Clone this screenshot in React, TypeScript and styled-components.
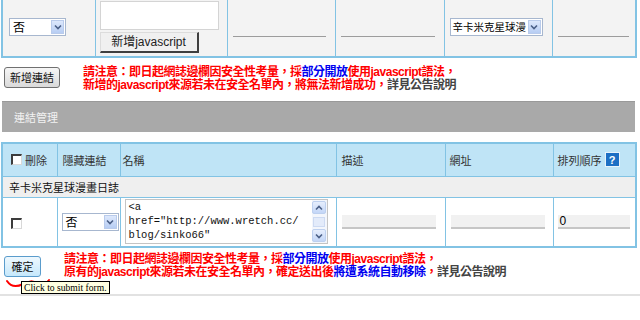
import React from 'react';
import styled, { createGlobalStyle } from 'styled-components';

const GlobalStyle = createGlobalStyle`
  html, body {
    margin: 0;
    padding: 0;
    background: #fff;
  }
  body {
    font-family: "Noto Sans CJK TC", "Noto Sans", sans-serif;
    font-size: 11px;
    color: #333;
  }
`;

const Page = styled.div`
  position: relative;
  width: 640px;
  height: 320px;
  overflow: hidden;
  background: #fff;
`;

const Grid = styled.table<{ $open?: boolean }>`
  margin-left: 1px;
  width: 634px;
  table-layout: fixed;
  border-collapse: collapse;
  border: 2px solid #82c3e4;
  ${(p) => (p.$open ? 'border-top: none;' : '')}

  td {
    border: 1px solid #82c3e4;
    ${(p) => (p.$open ? 'border-top: none;' : '')}
  }
`;

const Row = styled.tr<{ $h: number; $bg: string }>`
  height: ${(p) => p.$h}px;
  background: ${(p) => p.$bg};
`;

const Cell = styled.td<{ $pad?: string; $top?: boolean }>`
  padding: ${(p) => p.$pad || '0 5px'};
  vertical-align: ${(p) => (p.$top ? 'top' : 'middle')};
  font-size: 11px;
  line-height: 14px;
  color: #333;
  white-space: nowrap;
  overflow: hidden;
`;

const GroupCell = styled(Cell)`
  color: #111;
  padding-left: 6px;
`;

const SelectBox = styled.div<{ $w: number }>`
  display: flex;
  width: ${(p) => p.$w}px;
  height: 18px;
  box-sizing: border-box;
  border: 1px solid #a7b7cf;
  background: #fff;
`;

const SelectText = styled.span<{ $size?: number }>`
  flex: 1;
  min-width: 0;
  padding-left: ${(p) => (p.$size ? 2 : 3)}px;
  font-size: ${(p) => p.$size || 12}px;
  line-height: 16px;
  color: #000;
  white-space: nowrap;
`;

const SelectArrow = styled.span`
  flex: none;
  width: 13px;
  margin: 1px;
  box-sizing: border-box;
  border: 1px solid #b9cbeb;
  background: linear-gradient(#dde8fc, #b7cdf3);
  display: flex;
  align-items: center;
  justify-content: center;
`;

const Chevron = () => (
  <svg width="8" height="6" viewBox="0 0 8 6">
    <polyline points="1,1.5 4,4.5 7,1.5" fill="none" stroke="#4a5f86" strokeWidth="1.6" />
  </svg>
);

const Select = ({ w, value, size }: { w: number; value: string; size?: number }) => (
  <SelectBox $w={w}>
    <SelectText $size={size}>{value}</SelectText>
    <SelectArrow>
      <Chevron />
    </SelectArrow>
  </SelectBox>
);

const LineInput = styled.div<{ $w: number; $fill?: boolean }>`
  width: ${(p) => p.$w}px;
  height: 14px;
  box-sizing: border-box;
  background: ${(p) => (p.$fill ? '#f1f1f1' : 'transparent')};
  border-bottom: ${(p) => (p.$fill ? '2px solid #c6c6c6' : '1px solid #9c9c9c')};
  padding-left: 2px;
  font-family: "Liberation Sans", Arial, sans-serif;
  font-size: 12px;
  line-height: 13px;
  color: #000;
`;

const Stack = styled.div`
  display: flex;
  flex-direction: column;
  gap: 2px;
`;

const SmallArea = styled.div`
  width: 119px;
  height: 29px;
  box-sizing: border-box;
  border: 1px solid #d4d4d4;
  background: #fff;
`;

const FlatButton = styled.div`
  width: 99px;
  height: 21px;
  box-sizing: border-box;
  background: #f0f0f0;
  border: 1px solid #dcdcdc;
  border-right: 2px solid #3f3f3f;
  border-bottom: 2px solid #3f3f3f;
  font-family: "Liberation Sans", "Noto Sans CJK TC", sans-serif;
  font-size: 12px;
  line-height: 18px;
  text-align: center;
  color: #222;
`;

const ActionRow = styled.div<{ $mt: number; $center?: boolean }>`
  display: flex;
  align-items: ${(p) => (p.$center ? 'center' : 'flex-start')};
  gap: 23px;
  margin-top: ${(p) => p.$mt}px;
  padding-left: 4px;
`;

const GrayButton = styled.div`
  width: 56px;
  height: 21px;
  margin-top: 1px;
  box-sizing: border-box;
  border: 1px solid #707070;
  border-radius: 3px;
  background: linear-gradient(#f6f6f6, #dadada);
  font-size: 11px;
  line-height: 19px;
  text-align: center;
  color: #111;
`;

const ButtonWrap = styled.div`
  position: relative;
  flex: none;
`;

const BlueButton = styled.div`
  width: 37px;
  height: 21px;
  box-sizing: border-box;
  border: 1px solid #5a9ccc;
  border-radius: 3px;
  background: linear-gradient(#eef8fe, #c6e8fb);
  font-size: 11px;
  line-height: 19px;
  text-align: center;
  color: #111;
`;

const Tooltip = styled.div`
  position: absolute;
  left: 17px;
  top: 25px;
  padding: 0 2px;
  border: 1px solid #000;
  background: #ffffe1;
  font-family: "Liberation Serif", "Times New Roman", serif;
  font-size: 9.6px;
  line-height: 11px;
  color: #000;
  white-space: nowrap;
  z-index: 2;
`;

const Scribble = styled.svg`
  position: absolute;
  left: 0;
  top: 22px;
  z-index: 1;
`;

const Notice = styled.div`
  font-family: "Liberation Sans", "Noto Sans CJK TC", sans-serif;
  font-size: 12px;
  font-weight: 700;
  letter-spacing: -0.5px;
  line-height: 13px;
  color: #ff0000;
  white-space: nowrap;
`;

const Blue = styled.span`
  color: #0000f0;
`;

const Gray = styled.span`
  color: #444;
`;

const SectionBar = styled.div`
  margin: 9px 0 0 2px;
  width: 633px;
  height: 31px;
  box-sizing: border-box;
  border-top: 1px solid #999;
  background: #a9a9a9;
  padding-left: 12px;
  display: flex;
  align-items: center;
  font-size: 11px;
  color: #f2f2f2;
`;

const Check = styled.span`
  display: inline-block;
  width: 11px;
  height: 11px;
  box-sizing: border-box;
  background: #fff;
  border-top: 2px solid #3c3c3c;
  border-left: 2px solid #3c3c3c;
  border-right: 1px solid #d8d8d8;
  border-bottom: 1px solid #d8d8d8;
  vertical-align: middle;
`;

const HeadLabel = styled.span`
  display: inline-flex;
  align-items: center;
  gap: 3px;
`;

const HelpIcon = styled.span`
  display: inline-flex;
  align-items: center;
  justify-content: center;
  width: 15px;
  height: 15px;
  box-sizing: border-box;
  border: 1px solid #e8f3fb;
  background: #1d6fc4;
  color: #fff;
  font-family: "Liberation Sans", Arial, sans-serif;
  font-weight: 700;
  font-size: 11px;
`;

const CodeBox = styled.div`
  display: flex;
  width: 203px;
  height: 45px;
  box-sizing: border-box;
  border: 1px solid #c4c4c4;
  background: #fff;
`;

const CodeText = styled.pre`
  margin: 0;
  flex: 1;
  padding: 0 3px;
  font-family: "Liberation Mono", "Courier New", monospace;
  font-size: 10.5px;
  line-height: 14px;
  color: #111;
  overflow: hidden;
`;

const ScrollTrack = styled.div`
  width: 15px;
  display: flex;
  flex-direction: column;
  justify-content: space-between;
  align-items: center;
  background: #f3f6fc;
  padding: 1px 0;
`;

const ScrollBtn = styled.span`
  width: 14px;
  height: 13px;
  box-sizing: border-box;
  border: 1px solid #bdd0ef;
  border-radius: 2px;
  background: linear-gradient(#e6eefd, #c3d6f7);
  display: flex;
  align-items: center;
  justify-content: center;
`;

const ScrollThumb = styled.span`
  width: 10px;
  height: 8px;
  border: 1px solid #cddaf2;
  background: #e3ebfa;
`;

const Divider = styled.div`
  margin-top: 15px;
  width: 640px;
  height: 2px;
  background: #e2e2e2;
`;

const topCols = [93, 132, 108, 109, 108, 84];
const linkCols = [55, 63, 216, 109, 108, 83];

export default function App() {
  return (
    <Page>
      <GlobalStyle />
      <Grid $open>
        <colgroup>
          {topCols.map((w, i) => (
            <col key={i} style={{ width: w }} />
          ))}
        </colgroup>
        <tbody>
          <Row $h={57} $bg="#f3f3f3">
            <Cell $pad="0 6px 2px">
              <Select w={57} value="否" />
            </Cell>
            <Cell $top $pad="1px 4px 0">
              <Stack>
                <SmallArea />
                <FlatButton>新增javascript</FlatButton>
              </Stack>
            </Cell>
            <Cell $pad="3px 5px 0">
              <LineInput $w={93} />
            </Cell>
            <Cell $pad="3px 5px 0">
              <LineInput $w={94} />
            </Cell>
            <Cell $pad="0 5px 2px">
              <Select w={93} value="辛卡米克星球漫" size={10.5} />
            </Cell>
            <Cell $pad="3px 5px 0">
              <LineInput $w={71} />
            </Cell>
          </Row>
        </tbody>
      </Grid>

      <ActionRow $mt={8}>
        <GrayButton>新增連結</GrayButton>
        <Notice>
          請注意：即日起網誌邊欄因安全性考量，採<Blue>部分開放</Blue>使用javascript語法，
          <br />
          新增的javascript來源若未在安全名單內，將無法新增成功，<Gray>詳見公告說明</Gray>
        </Notice>
      </ActionRow>

      <SectionBar>連結管理</SectionBar>

      <Grid style={{ marginTop: 10 }}>
        <colgroup>
          {linkCols.map((w, i) => (
            <col key={i} style={{ width: w }} />
          ))}
        </colgroup>
        <tbody>
          <Row $h={33} $bg="#bfe4f6">
            <Cell $pad="0 3px 0 8px">
              <HeadLabel>
                <Check />
                刪除
              </HeadLabel>
            </Cell>
            <Cell>隱藏連結</Cell>
            <Cell $pad="0 2px">名稱</Cell>
            <Cell>描述</Cell>
            <Cell $pad="0 4px">網址</Cell>
            <Cell $pad="0 4px">
              <HeadLabel>
                排列順序
                <HelpIcon>?</HelpIcon>
              </HeadLabel>
            </Cell>
          </Row>
          <Row $h={21} $bg="#efefef">
            <GroupCell colSpan={6}>辛卡米克星球漫畫日誌</GroupCell>
          </Row>
          <Row $h={50} $bg="#fff">
            <Cell $pad="0 8px">
              <Check />
            </Cell>
            <Cell $pad="0 4px">
              <Select w={57} value="否" />
            </Cell>
            <Cell $pad="0 4px">
              <CodeBox>
                <CodeText>
                  {'<a\nhref="http://www.wretch.cc/\nblog/sinko66"'}
                </CodeText>
                <ScrollTrack>
                  <ScrollBtn>
                    <svg width="8" height="6" viewBox="0 0 8 6">
                      <polyline points="1,4.5 4,1.5 7,4.5" fill="none" stroke="#4a5f86" strokeWidth="1.6" />
                    </svg>
                  </ScrollBtn>
                  <ScrollThumb />
                  <ScrollBtn>
                    <Chevron />
                  </ScrollBtn>
                </ScrollTrack>
              </CodeBox>
            </Cell>
            <Cell>
              <LineInput $w={94} $fill />
            </Cell>
            <Cell>
              <LineInput $w={94} $fill />
            </Cell>
            <Cell $pad="0 4px">
              <LineInput $w={72} $fill>
                0
              </LineInput>
            </Cell>
          </Row>
        </tbody>
      </Grid>

      <ActionRow $mt={5} $center>
        <ButtonWrap>
          <BlueButton>確定</BlueButton>
          <Scribble width="48" height="12" viewBox="0 0 48 12">
            <path
              d="M3 3 C7 9, 13 9, 19 6 S29 2, 33 6 S41 7, 45 2"
              fill="none"
              stroke="#ff0000"
              strokeWidth="2"
              strokeLinecap="round"
            />
          </Scribble>
          <Tooltip>Click to submit form.</Tooltip>
        </ButtonWrap>
        <Notice>
          請注意：即日起網誌邊欄因安全性考量，採<Blue>部分開放</Blue>使用javascript語法，
          <br />
          原有的javascript來源若未在安全名單內，確定送出後<Blue>將遭系統自動移除</Blue>，<Gray>詳見公告說明</Gray>
        </Notice>
      </ActionRow>

      <Divider />
    </Page>
  );
}
